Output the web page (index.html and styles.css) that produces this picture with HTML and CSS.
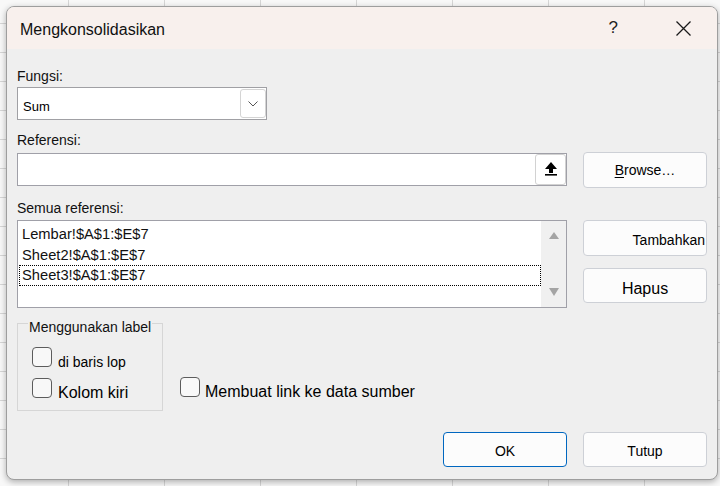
FILE: index.html
```html
<!DOCTYPE html>
<html lang="id">
<head>
<meta charset="utf-8">
<title>Mengkonsolidasikan</title>
<link rel="stylesheet" href="styles.css">
</head>
<body>
<div class="dialog">
  <div class="titlebar">
    <span class="title">Mengkonsolidasikan</span>
    <span class="help">?</span>
    <svg class="close" width="15" height="15" viewBox="0 0 15 15"><path d="M0.5 0.5 L14.5 14.5 M14.5 0.5 L0.5 14.5" stroke="#1a1a1a" stroke-width="1.3" fill="none"/></svg>
  </div>
  <div class="body">
    <div class="label">Fungsi:</div>
    <div class="select">
      <span class="select-text">Sum</span>
      <span class="drop-btn"><svg width="10" height="6" viewBox="0 0 10 6"><polyline points="0.5,0.5 5,5 9.5,0.5" fill="none" stroke="#555" stroke-width="1"/></svg></span>
    </div>

    <div class="label gap12">Referensi:</div>
    <div class="row ref-row">
      <div class="input">
        <span class="upload-btn"><svg width="12" height="14" viewBox="0 0 12 14"><polygon points="6,0 12,7 8,7 8,11 4,11 4,7 0,7" fill="#000"/><rect x="0" y="12" width="12" height="1.6" fill="#000"/></svg></span>
      </div>
      <div class="btn btn-browse"><span><u>B</u>rowse…</span></div>
    </div>

    <div class="label gap12">Semua referensi:</div>
    <div class="row list-row">
      <div class="list">
        <div class="items">
          <div class="item">Lembar!$A$1:$E$7</div>
          <div class="item">Sheet2!$A$1:$E$7</div>
          <div class="item focus">Sheet3!$A$1:$E$7</div>
        </div>
        <div class="scrollbar">
          <span class="tri-up"></span>
          <span class="tri-down"></span>
        </div>
      </div>
      <div class="side">
        <div class="btn btn-add">Tambahkan</div>
        <div class="btn btn-del">Hapus</div>
      </div>
    </div>

    <div class="row group-row">
      <div class="group">
        <div class="legend">Menggunakan label</div>
        <div class="check first"><span class="box"></span><span class="small">di baris lop</span></div>
        <div class="check second"><span class="box"></span><span class="big">Kolom kiri</span></div>
      </div>
      <div class="link-wrap">
        <div class="check"><span class="box"></span><span class="big">Membuat link ke data sumber</span></div>
      </div>
    </div>

    <div class="row actions">
      <div class="btn btn-ok">OK</div>
      <div class="btn btn-close">Tutup</div>
    </div>
  </div>
</div>
</body>
</html>
```

FILE: styles.css
```css
html, body {
  margin: 0;
  padding: 0;
  width: 720px;
  height: 486px;
  overflow: hidden;
}
body {
  font-family: "Liberation Sans", Arial, sans-serif;
  color: #000;
  background-color: #f8f8f8;
  background-image:
    linear-gradient(to right, #d6d6d6 1px, transparent 1px),
    linear-gradient(to bottom, #d6d6d6 1px, transparent 1px);
  background-size: 96px 29px;
  background-position: 68px 23px;
}
.dialog {
  margin: 6px;
  width: 712px;
  height: 474px;
  box-sizing: border-box;
  border: 1px solid #9e9e9e;
  border-radius: 8px;
  background: #efefef;
  overflow: hidden;
  box-shadow: 0 2px 6px rgba(0, 0, 0, 0.3);
}
.titlebar {
  height: 42px;
  background: #f8f0ed;
  display: flex;
  align-items: center;
  padding: 0 26px 0 13px;
}
.title {
  flex: 1;
  font-size: 16px;
  color: #111;
  margin-top: 3px;
}
.help {
  font-size: 17px;
  color: #222;
}
.close {
  margin-left: 58px;
  display: block;
}
.body {
  padding: 19px 10px 0 10px;
}
.label {
  font-size: 14px;
  line-height: 16px;
  height: 16px;
  color: #111;
}
.gap12 { margin-top: 12px; }
.row {
  display: flex;
  gap: 16px;
}
.select {
  margin-top: 3px;
  width: 250px;
  height: 33px;
  box-sizing: border-box;
  border: 1px solid #a0a0a4;
  background: #fff;
  display: flex;
  align-items: center;
  padding-left: 5px;
}
.select-text {
  flex: 1;
  font-size: 13px;
  margin-top: 5px;
}
.drop-btn {
  width: 26px;
  height: 29px;
  box-sizing: border-box;
  border: 1px solid #d4d4d4;
  border-radius: 3px;
  background: #fff;
  display: flex;
  align-items: center;
  justify-content: center;
}
.drop-btn svg { display: block; margin-top: 1px; }
.ref-row {
  margin-top: 4px;
  height: 36px;
  align-items: flex-start;
}
.input {
  margin-top: 1px;
  width: 550px;
  height: 33px;
  box-sizing: border-box;
  border: 1px solid #a0a0a8;
  background: #fff;
  display: flex;
  justify-content: flex-end;
}
.upload-btn {
  width: 31px;
  height: 31px;
  box-sizing: border-box;
  border: 1px solid #d2d2d2;
  border-radius: 3px;
  background: #fff;
  display: flex;
  align-items: center;
  justify-content: center;
}
.upload-btn svg { display: block; margin-top: -2px; }
.btn {
  width: 124px;
  box-sizing: border-box;
  border: 1px solid #cdd0d6;
  border-radius: 4px;
  background: #fcfcfc;
  font-size: 14px;
  display: flex;
  align-items: center;
  justify-content: center;
}
.btn-browse { height: 36px; }
.btn-browse u { text-decoration-thickness: 1px; text-underline-offset: 2px; }
.list-row {
  margin-top: 4px;
}
.list {
  width: 550px;
  height: 88px;
  box-sizing: border-box;
  border: 1px solid #a0a0a8;
  background: #fff;
  display: flex;
}
.items {
  flex: 1;
  padding-top: 3px;
}
.item {
  margin-left: 1px;
  border: 1px solid transparent;
  padding: 1px 0 0 2px;
  line-height: 17.5px;
  font-size: 14.7px;
  color: #111;
}
.item.focus {
  border: 1px dotted #000;
}
.scrollbar {
  width: 25px;
  background: #f0f0f0;
  display: flex;
  flex-direction: column;
  justify-content: space-between;
  align-items: center;
  padding: 11px 0;
  box-sizing: border-box;
}
.tri-up, .tri-down {
  width: 0;
  height: 0;
  border-left: 5px solid transparent;
  border-right: 5px solid transparent;
}
.tri-up { border-bottom: 7px solid #a4a4a4; }
.tri-down { border-top: 8px solid #a4a4a4; }
.side {
  display: flex;
  flex-direction: column;
  gap: 12px;
}
.btn-add {
  height: 36px;
  justify-content: flex-end;
  padding: 3px 1px 0 0;
}
.btn-del {
  height: 35px;
  font-size: 16px;
  padding-top: 6px;
}
.group-row {
  margin-top: 15px;
  gap: 0;
}
.group {
  width: 146px;
  height: 88px;
  box-sizing: border-box;
  border: 1px solid #d6d6d6;
  padding-left: 14px;
}
.legend {
  width: fit-content;
  margin: -5px 0 0 -4px;
  padding: 0 1px;
  background: #efefef;
  font-size: 14px;
  line-height: 16px;
  color: #111;
}
.check {
  display: flex;
  align-items: baseline;
  gap: 6px;
}
.check.first { margin-top: 12px; }
.check.second { margin-top: 8px; }
.box {
  width: 20px;
  height: 20px;
  box-sizing: border-box;
  border: 1px solid #5c5c5c;
  border-radius: 4px;
  background: #f8f8f8;
}
.small {
  font-size: 14px;
  line-height: 16px;
}
.big {
  font-size: 16px;
  line-height: 18px;
}
.link-wrap {
  margin-left: 17px;
  padding-top: 54px;
}
.link-wrap .check { gap: 5px; }
.actions {
  margin-top: 21px;
  justify-content: flex-end;
}
.btn-ok, .btn-close {
  height: 35px;
  padding-top: 3px;
}
.btn-ok {
  border-color: #0067c0;
}
```
